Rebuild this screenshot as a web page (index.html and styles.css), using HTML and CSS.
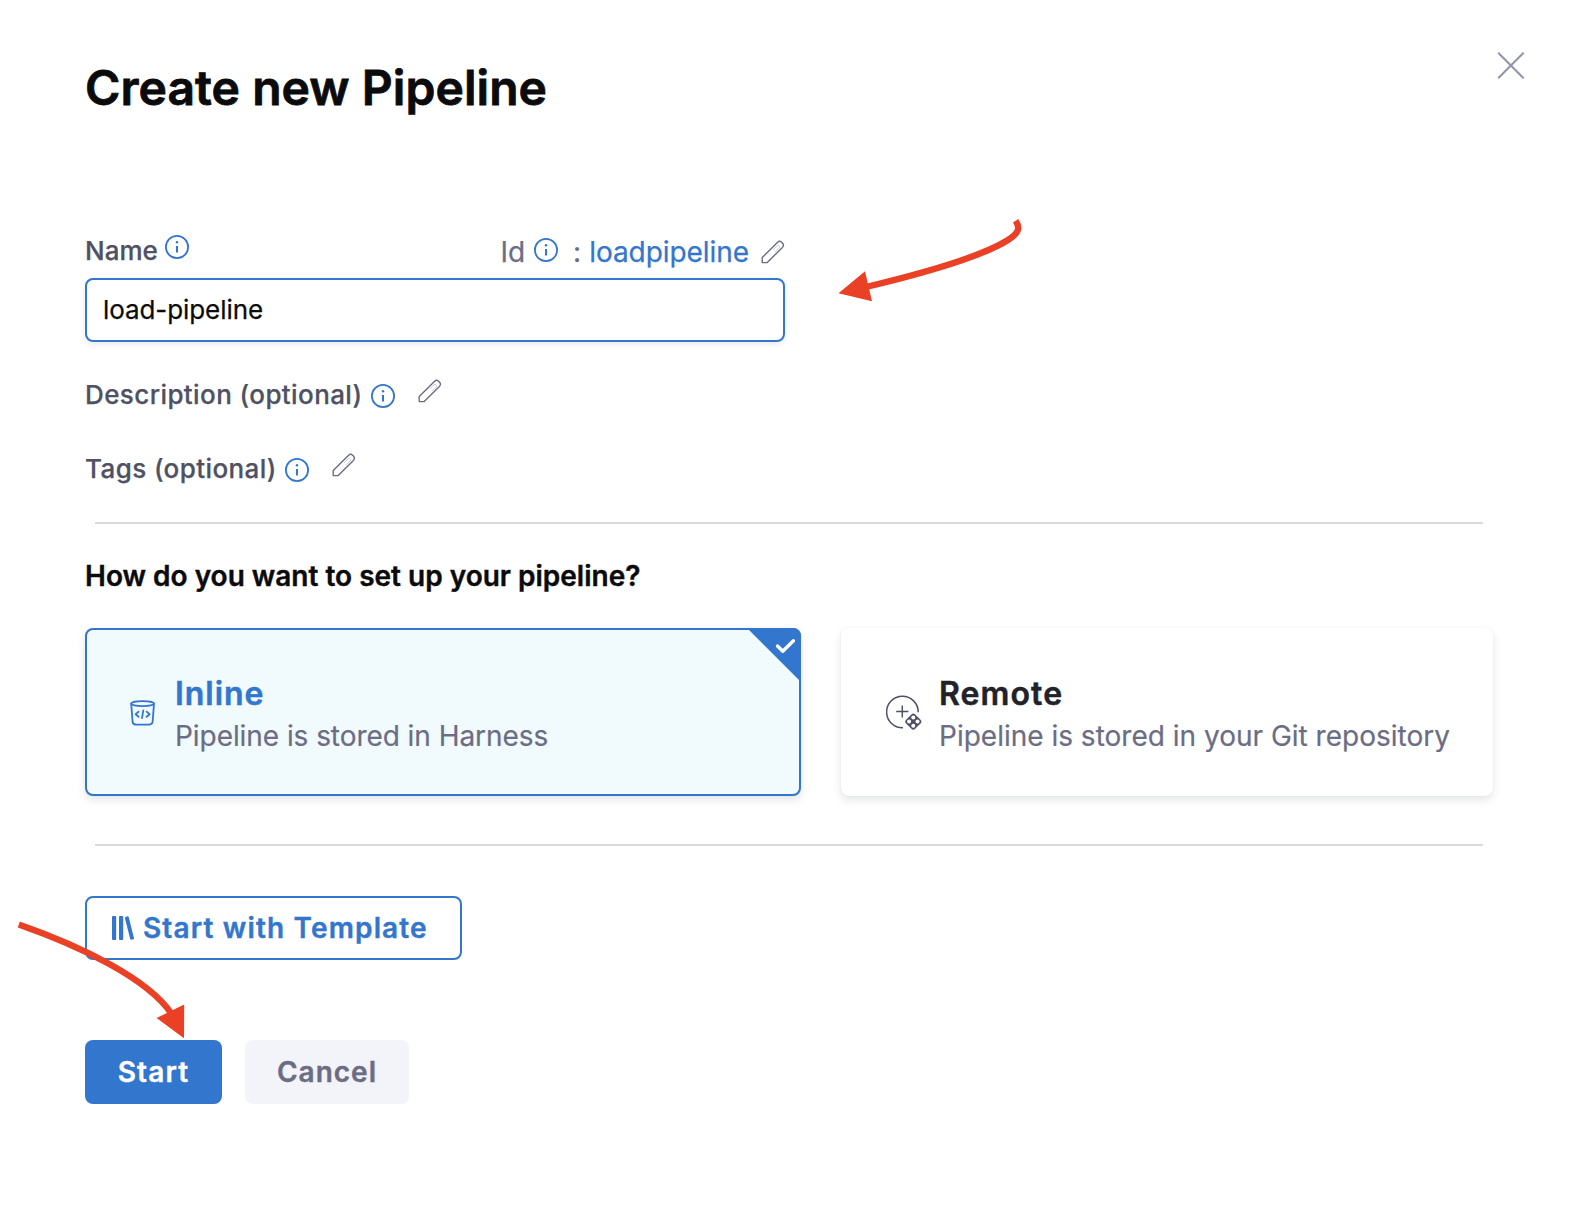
FILE: index.html
```
<!DOCTYPE html>
<html lang="en">
<head>
<meta charset="utf-8">
<title>Create new Pipeline</title>
<link rel="stylesheet" href="styles.css">
</head>
<body>
<svg class="defs" width="0" height="0" aria-hidden="true">
  <symbol id="info" viewBox="0 0 24 24">
    <circle cx="12" cy="12" r="11.1" fill="none" stroke="currentColor" stroke-width="1.8"/>
    <circle cx="12" cy="7.2" r="1.2" fill="currentColor"/>
    <path d="M12 11v6.6" stroke="currentColor" stroke-width="2"/>
  </symbol>
  <symbol id="pencil" viewBox="0 0 24 24">
    <path d="M1.2 22.6V17.6L16.4 2.4Q18.6 0.4 20.6 2.2L21.6 3.2Q23.4 5.2 21.4 7.4L6.2 22.6Z" fill="none" stroke="currentColor" stroke-width="1.4" stroke-linejoin="round"/>
    <path d="M12 10l5-5 2 2-5 5" fill="none" stroke="currentColor" stroke-width=".8" opacity=".4"/>
  </symbol>
</svg>
<main class="dialog">
  <header class="header">
    <h1 class="title">Create new Pipeline</h1>
    <button class="close" aria-label="Close"><svg width="28" height="28" viewBox="0 0 28 28"><path d="M1.2 .8l25.4 25.4M26.6 .8L1.2 26.2" stroke="#9293ab" stroke-width="2"/></svg></button>
  </header>

  <section class="name-field">
    <div class="label-row">
      <label class="label name-label" for="name">Name</label>
      <svg class="info name-info"><use href="#info"/></svg>
      <div class="id-group">
        <span>Id</span>
        <svg class="info id-info"><use href="#info"/></svg>
        <span class="colon">:</span>
        <span class="id-value">loadpipeline</span>
        <svg class="pencil"><use href="#pencil"/></svg>
      </div>
    </div>
    <input class="input" id="name" type="text" value="load-pipeline">
  </section>
  <div class="optional-row">
    <span class="label wide">Description (optional)</span>
    <svg class="info"><use href="#info"/></svg>
    <svg class="pencil raised"><use href="#pencil"/></svg>
  </div>
  <div class="optional-row tags">
    <span class="label wide">Tags (optional)</span>
    <svg class="info"><use href="#info"/></svg>
    <svg class="pencil raised"><use href="#pencil"/></svg>
  </div>
  <hr class="divider">
  <h2 class="question">How do you want to set up your pipeline?</h2>
  <section class="cards">
    <div class="card selected">
      <svg class="bucket" width="26" height="26" viewBox="0 0 26 26" fill="none" stroke="#3376cd" stroke-width="1.8" stroke-linecap="round" stroke-linejoin="round">
        <ellipse cx="12.6" cy="3.6" rx="11.4" ry="2.5"/>
        <path d="M1.2 3.600L2.600 22Q3 24.600 6.600 24.600H18.600Q22.300 24.600 22.600 22L24 3.600"/>
        <path d="M8.600 11.600L5.600 14.200 8.600 16.800M16.600 11.600l3 2.600L16.600 16.800M13.300 10.400l-1.300 7.800"/>
      </svg>
      <div class="card-text">
        <h3 class="card-title">Inline</h3>
        <p class="card-desc">Pipeline is stored in Harness</p>
      </div>
      <svg class="corner" width="54" height="54" viewBox="0 0 54 54"><path d="M0 0H54V54Z" fill="#3376cd"/><path d="M30.500 18l5.300 5.300 10.600-10.600" fill="none" stroke="#fff" stroke-width="3.400" stroke-linecap="round" stroke-linejoin="round"/></svg>
    </div>
    <div class="card remote">
      <svg class="remote-icon" width="36" height="36" viewBox="0 0 36 36" fill="none" stroke="#4f5162">
        <path d="M32.200 17.200A15.800 15.800 0 1 0 17 32.800" stroke-width="1.500"/>
        <path d="M16.300 10.600V22.600M10.200 16.600H22.400" stroke-width="1.500"/>
        <path d="M27.300 21.300l5.300 5.300-5.300 5.300-5.300-5.300z" fill="#4f5162" stroke-width="5.400" stroke-linejoin="round"/>
        <g fill="#fff" stroke="none"><circle cx="27.300" cy="22.400" r="2"/><circle cx="31.500" cy="26.600" r="2"/><circle cx="27.300" cy="30.800" r="2"/><circle cx="23.100" cy="26.600" r="2"/></g>
      </svg>
      <div class="card-text">
        <h3 class="card-title">Remote</h3>
        <p class="card-desc">Pipeline is stored in your Git repository</p>
      </div>
    </div>
  </section>
  <hr class="divider second">
  <button class="btn template">
    <svg width="23" height="24" viewBox="0 0 23 24" fill="#3376cd"><rect x="0" y="0" width="4.200" height="24" rx="1"/><rect x="7" y="0" width="4.200" height="24" rx="1"/><path d="M13.600 .9l2-.6q.9-.1 1.100.7L22 22.200q.1.900-.7 1.100l-2 .5q-.9.100-1.100-.7L12.900 2q-.1-.9.700-1.100z"/></svg>
    <span>Start with Template</span>
  </button>
  <footer class="actions">
    <button class="btn start">Start</button>
    <button class="btn cancel">Cancel</button>
  </footer>
  <svg class="arrows" width="1586" height="1227" viewBox="0 0 1586 1227" fill="none" stroke="#ea4025" stroke-width="6.400">
    <path d="M1015.600 220.800C1020.500 228 1019 233 1008 240C985 254.500 935 270.500 866 287"/>
    <path d="M838.500 293.300L865 271.300L872 301.200Z" fill="#ea4025" stroke="none"/>
    <path d="M18.800 924.500C80 946 147 978 171 1013"/>
    <path d="M184 1038.300L156.600 1018L184.200 1004.600Z" fill="#ea4025" stroke="none"/>
  </svg>
</main>
</body>
</html>
```
FILE: styles.css
```
* { box-sizing: border-box; }
body { margin: 0; background: #fff; font-family: Inter, "Liberation Sans", sans-serif; color: #0b0b0d; }
h1, h2, h3, p { margin: 0; }
button { font: inherit; border: 0; background: none; padding: 0; }
svg { flex: none; display: block; }
.defs { position: absolute; }
.dialog { position: relative; width: 1586px; height: 1227px; padding: 0 93px 0 85px; overflow: hidden; }
.header { display: flex; justify-content: space-between; height: 233px; padding-top: 52px; margin-right: -32px; }
.title { font-size: 48px; line-height: 58px; font-weight: 600; padding-top: 7px; letter-spacing: .06px; -webkit-text-stroke: .8px; }
.close { width: 28px; height: 28px; }
.name-field { width: 700px; }
.label-row { display: flex; align-items: center; height: 45px; padding-bottom: 9px; }
.label { font-size: 26px; line-height: 36px; font-weight: 500; color: #4f5162; -webkit-text-stroke: .25px; }
.wide { letter-spacing: .4px; }
.info { width: 24px; height: 24px; color: #3376cd; }
.name-info { margin: -8px 0 0 7px; }
.id-group { display: flex; align-items: center; margin-left: auto; font-size: 28px; line-height: 36px; color: #6b6d85; padding-top: 2px; -webkit-text-stroke: .25px; }
.id-info { margin: -4px 0 0 9px; }
.colon { margin-left: 15px; }
.id-value { margin-left: 8px; color: #3376cd; letter-spacing: -.06px; }
.pencil { width: 24px; height: 24px; color: #6b6d85; margin-left: 12px; }
.id-group .pencil { margin: -1px 0 0 12px; }
.input { display: block; width: 700px; height: 64px; border: 2px solid #3376cd; border-radius: 8px; padding: 0 16px 2px; font: 400 26px Inter, "Liberation Sans", sans-serif; letter-spacing: -.08px; color: #0b0b0d; background: #fff; outline: 0; box-shadow: 0 2px 6px rgba(40, 41, 61, .1); -webkit-text-stroke: .25px; }
.optional-row { display: flex; align-items: center; height: 36px; margin-top: 35px; }
.optional-row .info { margin: 2px 0 0 9px; }
.optional-row .raised { margin: -8px 0 0 23px; }
.tags { margin-top: 38px; }
.tags .info { margin-left: 8px; }
.divider { border: 0; height: 2px; background: #d9d9da; margin: 35px 10px 0; }
.question { font-size: 28px; line-height: 36px; font-weight: 600; margin-top: 34px; -webkit-text-stroke: .4px; }
.cards { display: flex; gap: 40px; margin-top: 34px; }
.card { position: relative; display: flex; align-items: center; height: 168px; border-radius: 8px; background: #fff; box-shadow: 0 0 2px rgba(40, 41, 61, .06), 0 4px 8px rgba(96, 97, 112, .16); }
.selected { width: 716px; border: 2px solid #3376cd; background: #f1fafd; padding-left: 43px; }
.remote { width: 652px; padding-left: 45px; }
.bucket { margin: 2px 19px 0 0; }
.remote-icon { margin: 2px 17px 0 0; }
.card-text { padding-top: 6px; }
.card-title { font-size: 32px; line-height: 42px; font-weight: 600; letter-spacing: 1.1px; color: #22222a; -webkit-text-stroke: .5px; }
.selected .card-title { color: #3376cd; letter-spacing: .95px; }
.card-desc { font-size: 28px; line-height: 42px; color: #6b6d85; white-space: nowrap; letter-spacing: 0; -webkit-text-stroke: .2px; }
.selected .card-desc { letter-spacing: -.06px; }
.corner { position: absolute; top: -2px; right: -2px; border-top-right-radius: 8px; }
.second { margin-top: 48px; }
.btn { display: flex; align-items: center; justify-content: center; height: 64px; border-radius: 8px; font-size: 28px; font-weight: 600; letter-spacing: 1.15px; white-space: nowrap; -webkit-text-stroke: .4px; }
.template { width: 377px; border: 2px solid #3376cd; color: #3376cd; margin-top: 50px; justify-content: flex-start; padding-left: 25px; gap: 8px; }
.actions { display: flex; gap: 23px; margin-top: 80px; }
.start { width: 137px; background: #3376cd; color: #fff; }
.cancel { width: 164px; background: #f3f3fa; color: #6b6d85; letter-spacing: 1px; }
.arrows { position: absolute; left: 0; top: 0; pointer-events: none; }
```
